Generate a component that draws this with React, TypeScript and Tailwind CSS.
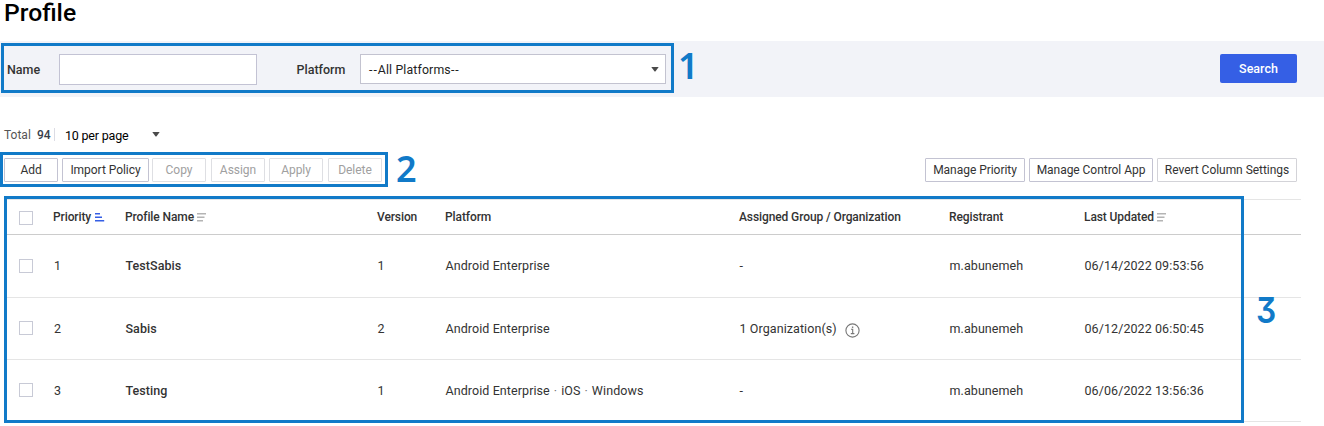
import type { ReactNode } from "react";

type Profile = {
  priority: number;
  name: string;
  version: number;
  platforms: string[];
  group: string;
  hasInfo?: boolean;
  registrant: string;
  updated: string;
};

const profiles: Profile[] = [
  { priority: 1, name: "TestSabis", version: 1, platforms: ["Android Enterprise"], group: "-", registrant: "m.abunemeh", updated: "06/14/2022 09:53:56" },
  { priority: 2, name: "Sabis", version: 2, platforms: ["Android Enterprise"], group: "1 Organization(s)", hasInfo: true, registrant: "m.abunemeh", updated: "06/12/2022 06:50:45" },
  { priority: 3, name: "Testing", version: 1, platforms: ["Android Enterprise", "iOS", "Windows"], group: "-", registrant: "m.abunemeh", updated: "06/06/2022 13:56:36" },
];

const columns = "grid grid-cols-[49px_71px_252px_68px_294px_210px_135px_1fr] items-center";

function Caret() {
  return (
    <svg width="8" height="5" viewBox="0 0 8 5" className="block" aria-hidden="true">
      <path d="M0.3 0h7.4L4.6 4.2a.8.8 0 0 1-1.2 0z" fill="#4a4a4a" />
    </svg>
  );
}

function SortIcon({ ascending = false }: { ascending?: boolean }) {
  return ascending ? (
    <svg width="10" height="9" viewBox="0 0 10 9" className="block" aria-hidden="true">
      <path d="M0 0h5v1.6H0zM0 3.5h7v1.6H0zM0 7h9.2v1.6H0z" fill="#355fe5" />
    </svg>
  ) : (
    <svg width="10" height="9" viewBox="0 0 10 9" className="block" aria-hidden="true">
      <path d="M0 0h9v1.5H0zM0 3.5h7.5v1.5H0zM0 7h6v1.5H0z" fill="#b4b4b4" />
    </svg>
  );
}

function InfoIcon() {
  return (
    <svg width="15" height="15" viewBox="0 0 15 15" className="mt-px block" fill="none" stroke="#777" aria-hidden="true">
      <circle cx="7.5" cy="7.5" r="6.6" strokeWidth="1.1" />
      <path d="M6 6.3h1.7v4.2M5.8 10.6h3.6" strokeWidth="1.1" />
      <path d="M6.9 4.2h1.4" strokeWidth="1.4" />
    </svg>
  );
}

function Checkbox({ className = "" }: { className?: string }) {
  return <span className={`ml-[14px] block size-[14px] border border-[#c8cad6] bg-white ${className}`} />;
}

function ToolButton({ className, children }: { className: string; children: ReactNode }) {
  return (
    <button className={`h-6 shrink-0 rounded-[1px] border text-center text-[12px] leading-[22px] font-[370] tracking-[-0.04px] whitespace-nowrap ${className}`}>
      {children}
    </button>
  );
}

export default function App() {
  const active = "border-[#c3c3d2] text-[#333]";
  const disabled = "border-[#dedfe3] text-[#a0a0a0]";
  return (
    <div className="relative h-[426px] w-[1324px] overflow-hidden bg-white font-['Roboto',sans-serif] text-[13px] text-[#333]">
      <h1 className="h-[41px] pl-1 text-[24.7px] leading-[25px] font-medium text-black">Profile</h1>

      <section className="flex h-14 items-start bg-[#f2f3f8] pt-[13px] pl-[7px]">
        <label className="w-[52px] text-[12.5px] leading-[31px] font-medium">Name</label>
        <input className="h-[31px] w-[198px] border border-[#c3c3d4] bg-white" />
        <label className="ml-[39.5px] w-[63.5px] text-[12.5px] leading-[31px] font-medium">Platform</label>
        <div className="flex h-[30px] w-[306px] items-center justify-between border border-[#c3c3d0] bg-white pr-[6px] pl-2 text-[12.3px] text-[#222]">
          <span className="mt-[2px] tracking-[0.15px]">
            <span className="tracking-[1px]">--</span>All Platforms<span className="tracking-[1px]">--</span>
          </span>
          <Caret />
        </div>
        <button className="mr-[27px] ml-auto h-[29px] w-[77px] rounded-[2px] bg-[#355fe5] pt-px text-[12.5px] font-medium text-white">
          Search
        </button>
      </section>

      <div className="flex h-[61px] items-start pt-[31px] pl-1 text-[12px] leading-[14px]">
        <span className="w-[33px] text-[#555]">Total</span>
        <span className="w-[17px] font-medium text-[#37404c]">94</span>
        <span className="h-[13px] w-px bg-[#dcdce4]" />
        <span className="mt-px ml-[10px] w-[87px] text-[12.5px] tracking-[-0.2px] text-black">10 per page</span>
        <span className="mt-1">
          <Caret />
        </span>
      </div>

      <div className="flex h-[41px] items-start pl-1">
        <ToolButton className={`w-[54px] ${active}`}>Add</ToolButton>
        <ToolButton className={`ml-1 w-[87px] ${active}`}>Import Policy</ToolButton>
        <ToolButton className={`ml-[3px] w-[54px] ${disabled}`}>Copy</ToolButton>
        <ToolButton className={`ml-[5px] w-[54px] ${disabled}`}>Assign</ToolButton>
        <ToolButton className={`ml-1 w-[54px] ${disabled}`}>Apply</ToolButton>
        <ToolButton className={`ml-[5px] w-[54px] ${disabled}`}>Delete</ToolButton>
        <ToolButton className={`ml-auto w-[100px] ${active}`}>Manage Priority</ToolButton>
        <ToolButton className={`ml-1 w-[124px] ${active}`}>Manage Control App</ToolButton>
        <ToolButton className="mr-[27px] ml-1 w-[140px] border-[#d3d3d8] text-[#333]">Revert Column Settings</ToolButton>
      </div>

      <main className="mr-[23px] ml-[5px]">
        <div className={`${columns} h-9 border-t border-b border-t-[#e5e5e5] border-b-[#ccc] text-[12px] font-medium tracking-[-0.1px]`}>
          <Checkbox className="mt-px" />
          <span className="-ml-px flex items-center gap-1">Priority <SortIcon ascending /></span>
          <span className="flex items-center gap-[3px]">Profile Name <SortIcon /></span>
          <span>Version</span>
          <span>Platform</span>
          <span>Assigned Group / Organization</span>
          <span>Registrant</span>
          <span className="flex items-center gap-[3px]">Last Updated <SortIcon /></span>
        </div>
        {profiles.map((p, row) => (
          <div
            key={p.priority}
            className={`${columns} border-b border-[#e5e5e5] text-[12.5px] tracking-[0.08px] ${row === 0 ? "h-[63px]" : "h-[62px] pt-[2px]"}`}
          >
            <Checkbox className={row === 0 ? "" : "-mt-[3px]"} />
            <span>{p.priority}</span>
            <span className="pl-[0.5px] font-medium tracking-[0.05px]">{p.name}</span>
            <span className="pl-[0.5px]">{p.version}</span>
            <span className="flex pl-[0.5px]">
              {p.platforms.map((name, i) => (
                <span key={name}>
                  {i > 0 && <span className="px-[4px] text-[#777]">·</span>}
                  {name}
                </span>
              ))}
            </span>
            <span className="flex items-center gap-2 pl-[0.5px]">
              {p.group}
              {p.hasInfo && <InfoIcon />}
            </span>
            <span className="pl-[0.5px]">{p.registrant}</span>
            <span className="pl-[0.5px]">{p.updated}</span>
          </div>
        ))}
      </main>

      <div className="absolute top-[43px] left-px h-[50px] w-[673px] border-3 border-[#117ac8]" />
      <div className="absolute top-[152px] left-0 h-[35px] w-[388px] border-3 border-[#117ac8]" />
      <div className="absolute top-[196px] left-1 h-[227px] w-[1240px] border-3 border-[#117ac8]" />
      <span className="absolute top-[48px] left-[678px] font-['Noto_Sans',sans-serif] text-[36px] leading-[36px] font-semibold text-[#117ac8]">1</span>
      <span className="absolute top-[151px] left-[396px] font-['Noto_Sans',sans-serif] text-[36px] leading-[36px] font-semibold text-[#117ac8]">2</span>
      <span className="absolute top-[292px] left-[1256px] origin-left scale-x-[0.88] font-['Inter',sans-serif] text-[36px] leading-[36px] font-semibold text-[#117ac8] [font-feature-settings:'cv09']">3</span>
    </div>
  );
}
